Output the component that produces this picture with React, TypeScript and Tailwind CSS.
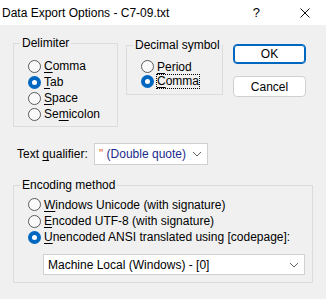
import React from "react";

function Radio({ checked }: { checked?: boolean }) {
  return checked ? (
    <span className="flex h-[13px] w-[13px] shrink-0 items-center justify-center rounded-full bg-[#0067c0]">
      <span className="h-[5px] w-[5px] rounded-full bg-white" />
    </span>
  ) : (
    <span className="h-[13px] w-[13px] shrink-0 rounded-full border border-[#5a5a5a] bg-[#fafafa]" />
  );
}

function Option({
  label,
  hot,
  checked,
  focus,
  h = "h-[16px]",
}: {
  label: string;
  hot: number;
  checked?: boolean;
  focus?: boolean;
  h?: string;
}) {
  const before = label.slice(0, hot);
  const key = label.slice(hot, hot + 1);
  const after = label.slice(hot + 1);
  return (
    <div className={`flex items-center gap-[3px] whitespace-nowrap ${h}`}>
      <Radio checked={checked} />
      <span className={focus ? "outline outline-1 outline-dotted outline-black leading-[13px]" : ""}>
        {before}
        <span className="underline underline-offset-2">{key}</span>
        {after}
      </span>
    </div>
  );
}

function Chevron() {
  return (
    <svg width="10" height="6" viewBox="0 0 10 6" className="shrink-0">
      <path d="M1 1 L5 5 L9 1" fill="none" stroke="#606060" strokeWidth="1" />
    </svg>
  );
}

export default function App() {
  return (
    <div className="flex h-[299px] w-[326px] flex-col bg-[#f0f0f0] font-['Liberation_Sans',Arial,sans-serif] text-[12px] leading-[16px] text-black">
      <div className="flex h-[25px] shrink-0 items-center bg-white pl-[2px]">
        <span className="text-[12px]">Data Export Options - C7-09.txt</span>
        <span className="ml-auto mr-[40px] text-[13px]">?</span>
        <svg width="10" height="10" viewBox="0 0 10 10" className="mr-[16px]">
          <path d="M0.5 0.5 L9.5 9.5 M9.5 0.5 L0.5 9.5" stroke="#111" strokeWidth="1" />
        </svg>
      </div>

      <div className="mt-[10px] flex items-start pl-[13px]">
        <fieldset className="h-[92px] w-[105px] min-w-0 shrink-0 border border-[#dcdcdc]">
          <legend className="ml-[6px] whitespace-nowrap px-[2px]">Delimiter</legend>
          <div className="mt-[7px] flex flex-col pl-[14px]">
            <Option label="Comma" hot={0} />
            <Option label="Tab" hot={0} checked />
            <Option label="Space" hot={0} />
            <Option label="Semicolon" hot={2} />
          </div>
        </fieldset>

        <fieldset className="ml-[8px] mt-[2px] h-[58px] w-[97px] min-w-0 shrink-0 border border-[#dcdcdc]">
          <legend className="ml-[6px] whitespace-nowrap px-[2px]">Decimal symbol</legend>
          <div className="mt-[6px] flex flex-col pl-[14px]">
            <Option label="Period" hot={0} h="h-[15px]" />
            <Option label="Comma" hot={0} checked focus h="h-[15px]" />
          </div>
        </fieldset>

        <div className="ml-[10px] mt-[9px] flex shrink-0 flex-col gap-[12px]">
          <button className="flex h-[20px] w-[73px] items-center justify-center rounded-[4px] border border-[#0067c0] bg-white shadow-[inset_0_0_0_1px_#0067c0]">
            OK
          </button>
          <button className="flex h-[21px] w-[73px] items-center justify-center rounded-[4px] border border-[#d0d0d0] bg-white">
            Cancel
          </button>
        </div>
      </div>

      <div className="mt-[16px] flex items-center pl-[17px]">
        <span className="w-[77px] whitespace-nowrap">
          Text <span className="underline underline-offset-2">q</span>ualifier:
        </span>
        <div className="flex h-[22px] w-[114px] items-center border border-[#d0d0d0] bg-white pl-[4px] pr-[5px]">
          <span className="whitespace-nowrap text-[#1b2a8c]">
            <span className="text-[#e0651a]">"</span> (Double quote)
          </span>
          <span className="ml-auto">
            <Chevron />
          </span>
        </div>
      </div>

      <fieldset className="ml-[13px] mt-[12px] h-[106px] w-[300px] min-w-0 border border-[#dcdcdc]">
        <legend className="ml-[6px] whitespace-nowrap px-[2px]">Encoding method</legend>
        <div className="mt-[3px] flex flex-col pl-[14px]">
          <Option label="Windows Unicode (with signature)" hot={0} h="h-[17px]" />
          <Option label="Encoded UTF-8 (with signature)" hot={0} h="h-[16px]" />
          <Option label="Unencoded ANSI translated using [codepage]:" hot={0} checked h="h-[16px]" />
        </div>
        <div className="ml-[29px] mt-[9px] flex h-[21px] w-[262px] items-center border border-[#d0d0d0] bg-white pl-[4px] pr-[5px]">
          <span className="whitespace-nowrap">Machine Local (Windows) - [0]</span>
          <span className="ml-auto">
            <Chevron />
          </span>
        </div>
      </fieldset>
    </div>
  );
}
